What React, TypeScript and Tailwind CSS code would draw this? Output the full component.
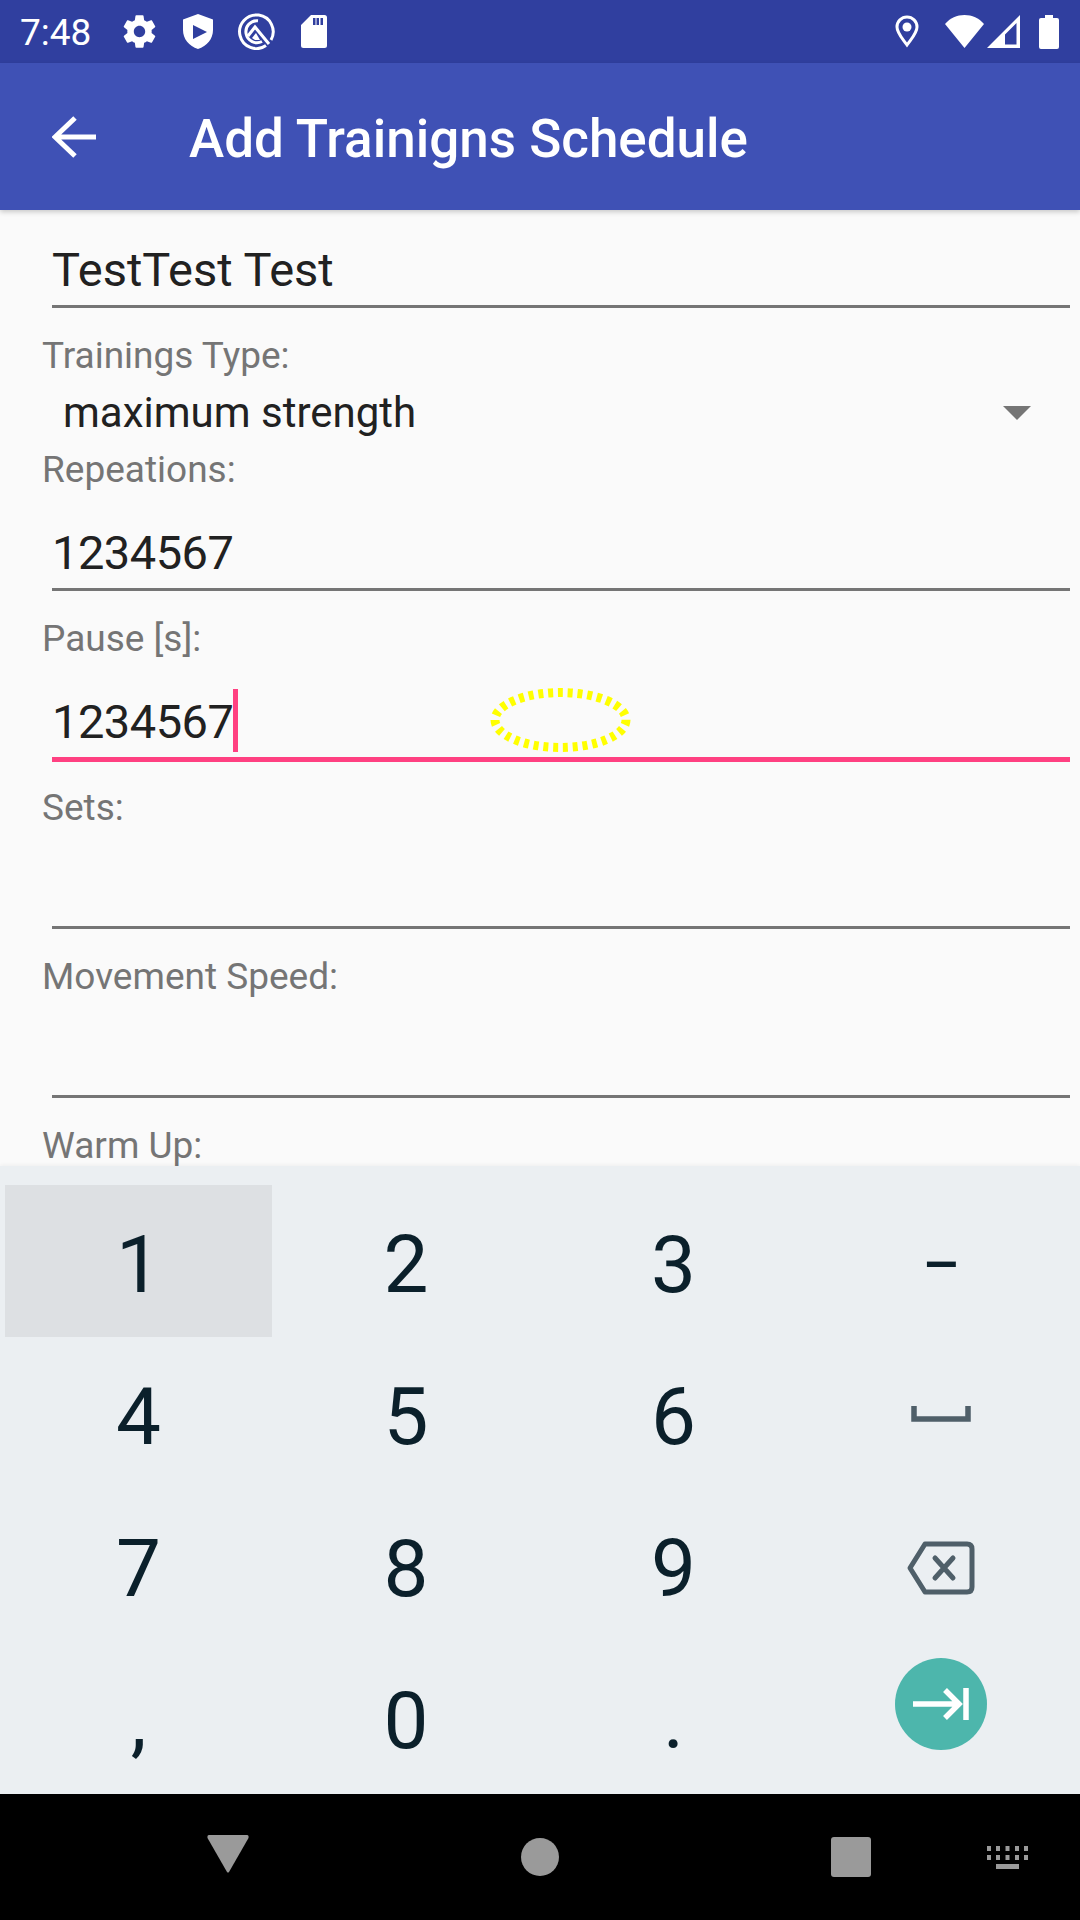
import React from "react";

const Gear = () => (
  <svg width="39" height="39" viewBox="0 0 24 24" fill="#fff"><path d="M19.43 12.98c.04-.32.07-.64.07-.98s-.03-.66-.07-.98l2.11-1.65c.19-.15.24-.42.12-.64l-2-3.46c-.12-.22-.39-.3-.61-.22l-2.49 1c-.52-.4-1.08-.73-1.69-.98l-.38-2.65C14.46 2.18 14.25 2 14 2h-4c-.25 0-.46.18-.49.42l-.38 2.65c-.61.25-1.17.59-1.69.98l-2.49-1c-.23-.09-.49 0-.61.22l-2 3.46c-.13.22-.07.49.12.64l2.11 1.65c-.04.32-.07.65-.07.98s.03.66.07.98l-2.11 1.65c-.19.15-.24.42-.12.64l2 3.46c.12.22.39.3.61.22l2.49-1c.52.4 1.08.73 1.69.98l.38 2.65c.03.24.24.42.49.42h4c.25 0 .46-.18.49-.42l.38-2.65c.61-.25 1.17-.59 1.69-.98l2.49 1c.23.09.49 0 .61-.22l2-3.46c.12-.22.07-.49-.12-.64l-2.11-1.65zM12 15.5c-1.93 0-3.5-1.57-3.5-3.5s1.57-3.5 3.5-3.5 3.5 1.57 3.5 3.5-1.57 3.500-3.500 3.500z" /></svg>
);
const Shield = () => (
  <svg width="30" height="35" viewBox="0 0 30 35"><path fill="#fff" fillRule="evenodd" d="M15 0 L30 5.500 V16 C30 25 24 32 15 35 C6 32 0 25 0 16 V5.500 Z M10 11 V25 L24 18 Z" /></svg>
);
const QIcon = () => (
  <svg width="37" height="37" viewBox="0 0 37 37" fill="none" stroke="#fff">
    <path strokeWidth="3" d="M28 32.500 A16.800 16.800 0 1 1 33 27" />
    <path strokeWidth="3" d="M24 28.500 A11 11 0 1 1 20 7.800" />
    <path strokeWidth="3" d="M10 23 L17 14 L31 31" />
    <path fill="#fff" stroke="none" d="M14 25 L18 20 L22 27 H17 Z" />
  </svg>
);
const Sd = () => (
  <svg width="26" height="33" viewBox="0 0 26 33"><path fill="#fff" fillRule="evenodd" d="M10 0 H23.500 Q26 0 26 2.500 V30.500 Q26 33 23.500 33 H2.500 Q0 33 0 30.500 V10 Z M12 3 V10 H14.500 V3 Z M15.500 3 V10 H18 V3 Z M19.500 3 V10 H22 V3 Z" /></svg>
);
const Pin = () => (
  <svg width="24" height="33" viewBox="0 0 24 33" fill="none"><path stroke="#fff" strokeWidth="3" d="M12 30 C7 23 2 18 2 12 A10 10 0 0 1 22 12 C22 18 17 23 12 30 Z" /><circle cx="12" cy="12" r="4.500" fill="#fff" /></svg>
);
const Wifi = () => (
  <svg width="39" height="33" viewBox="0 0 39 33"><path fill="#fff" d="M19.500 33 L0 9 C5 3 12 0 19.500 0 S34 3 39 9 Z" /></svg>
);
const Signal = () => (
  <svg width="33" height="33" viewBox="0 0 33 33"><path fill="#fff" fillRule="evenodd" d="M0 33 L33 0 V33 Z M18 29.500 H29.500 V8 L18 19.500 Z" /></svg>
);
const Battery = () => (
  <svg width="20" height="34" viewBox="0 0 20 34"><path fill="#fff" d="M6 0 H14 V3 H18 Q20 3 20 5 V32 Q20 34 18 34 H2 Q0 34 0 32 V5 Q0 3 2 3 H6 Z" /></svg>
);

const Label = ({ children }: { children: React.ReactNode }) => (
  <div className="h-[49px] pl-[42px] text-[37px] leading-[49px] text-[#757575]">{children}</div>
);

const Line = ({ active }: { active?: boolean }) => (
  <div className={active ? "ml-[52px] mr-[10px] h-[5px] bg-[#ff4081]" : "ml-[52px] mr-[10px] h-[3px] bg-[#757575]"} />
);

const Key = ({ children, pressed }: { children: React.ReactNode; pressed?: boolean }) => (
  <div className={`flex h-[152px] w-[267px] items-center justify-center text-[80px] leading-none text-[#0b202b] ${pressed ? "bg-[#dde0e3]" : ""}`}>
    {children}
  </div>
);

const Glyph = ({ children }: { children: React.ReactNode }) => <span className="pt-[7px]">{children}</span>;

export default function App() {
  return (
    <div className="flex h-[1920px] w-[1080px] flex-col overflow-hidden bg-[#fafafa] font-['Roboto',sans-serif]">
      <div className="flex h-[63px] shrink-0 items-center bg-[#303f9f] text-white">
        <span className="ml-[20px] w-[84px] pt-[2px] text-[37px] leading-none">7:48</span>
        <div className="ml-[16px] flex items-center">
          <Gear />
          <div className="ml-[24px]"><Shield /></div>
          <div className="ml-[25px]"><QIcon /></div>
          <div className="ml-[26px]"><Sd /></div>
        </div>
        <div className="ml-auto mr-[21px] flex items-center">
          <Pin />
          <div className="ml-[26px]"><Wifi /></div>
          <div className="ml-[3px]"><Signal /></div>
          <div className="ml-[19px]"><Battery /></div>
        </div>
      </div>

      <div className="z-10 flex h-[147px] shrink-0 items-center bg-[#3f51b5] shadow-[0_2px_5px_rgba(0,0,0,0.2)]">
        <svg className="ml-[52px]" width="44" height="44" viewBox="0 0 44 44" fill="none" stroke="#fff" strokeWidth="5"><path d="M44 22 H3 M23 3 L3 22 L23 41" /></svg>
        <span className="ml-[93px] pt-[5px] text-[53px] font-medium leading-none text-white">Add Trainigns Schedule</span>
      </div>

      <div className="min-h-0 flex-1 overflow-hidden">
        <div className="flex h-[95px] items-center pl-[52px] pt-[24px] text-[47px] leading-none text-[#212121]">TestTest Test</div>
        <Line />
        <div className="mt-[23px]"><Label>Trainings Type:</Label></div>
        <div className="flex h-[65px] items-center pl-[63px] pr-[49px] text-[42px] leading-none text-[#212121]">
          <span>maximum strength</span>
          <div className="ml-auto h-0 w-0 border-x-[14px] border-t-[14px] border-x-transparent border-t-[#757575]" />
        </div>
        <Label>Repeations:</Label>
        <div className="flex h-[94px] items-center pl-[52px] pt-[22px] text-[47px] leading-none tracking-[-0.5px] text-[#212121]">1234567</div>
        <Line />
        <div className="mt-[23px]"><Label>Pause [s]:</Label></div>
        <div className="relative flex h-[94px] items-center pl-[52px] pt-[22px] text-[47px] leading-none tracking-[-0.5px] text-[#212121]">
          <span>1234567</span>
          <div className="h-[63px] w-[5px] -translate-y-[1px] bg-[#ff4081]" />
          <svg className="absolute left-[490px] top-[24px]" width="141" height="66" viewBox="0 0 141 66" fill="none">
            <ellipse cx="70.500" cy="33" rx="65.500" ry="27.500" stroke="#ffff00" strokeWidth="9" strokeDasharray="5 4.800" />
          </svg>
        </div>
        <Line active />
        <div className="mt-[21px]"><Label>Sets:</Label></div>
        <div className="h-[94px]" />
        <Line />
        <div className="mt-[23px]"><Label>Movement Speed:</Label></div>
        <div className="h-[94px]" />
        <Line />
        <div className="mt-[23px]"><Label>Warm Up:</Label></div>
      </div>

      <div className="z-10 flex h-[628px] shrink-0 flex-col bg-[#ebeff2] px-[5px] pt-[19px] shadow-[0_-1px_4px_rgba(0,0,0,0.05)]">
        <div className="grid grid-cols-4">
          <Key pressed><Glyph>1</Glyph></Key><Key><Glyph>2</Glyph></Key><Key><Glyph>3</Glyph></Key>
          <Key><span className="pt-[7px] text-[58px] font-medium">–</span></Key>
          <Key><Glyph>4</Glyph></Key><Key><Glyph>5</Glyph></Key><Key><Glyph>6</Glyph></Key>
          <Key>
            <svg className="translate-y-[1px]" width="60" height="16" viewBox="0 0 60 16" fill="none" stroke="#4f5f69" strokeWidth="5.500"><path d="M3 0 V13 H57 V0" /></svg>
          </Key>
          <Key><Glyph>7</Glyph></Key><Key><Glyph>8</Glyph></Key><Key><Glyph>9</Glyph></Key>
          <Key>
            <svg className="translate-y-[3px]" width="68" height="54" viewBox="0 0 68 54" fill="none" stroke="#4f5f69" strokeWidth="5" strokeLinejoin="round" strokeLinecap="round"><path d="M18 3 H60 Q65 3 65 8 V46 Q65 51 60 51 H18 L3 27 Z" /><path d="M28 17 L46 37 M46 17 L28 37" /></svg>
          </Key>
          <Key><Glyph>,</Glyph></Key>
          <Key><Glyph>0</Glyph></Key>
          <Key><Glyph>.</Glyph></Key>
          <Key>
            <div className="flex h-[92px] w-[92px] -translate-y-[13px] items-center justify-center rounded-full bg-[#4db6ac]">
              <svg width="56" height="34" viewBox="0 0 56 34" fill="none" stroke="#fff" strokeWidth="5.500"><path d="M0 17 H46 M32 3 L46 17 L32 31" /><path d="M53 1 V33" /></svg>
            </div>
          </Key>
        </div>
      </div>

      <div className="relative flex h-[126px] shrink-0 bg-black">
        <svg className="absolute left-[207px] top-[41px]" width="42" height="38" viewBox="0 0 42 38"><path fill="#9a9a9a" d="M2 0 H40 Q42 0 41.500 3 L22 37 Q21 38 20 37 L.5 3 Q0 0 2 0 Z" /></svg>
        <div className="absolute left-[521px] top-[44px] h-[38px] w-[38px] rounded-full bg-[#9a9a9a]" />
        <div className="absolute left-[831px] top-[43px] h-[40px] w-[40px] rounded-[3px] bg-[#9a9a9a]" />
        <svg className="absolute left-[987px] top-[52px]" width="41" height="23" viewBox="0 0 41 23" fill="#9a9a9a">
          <path d="M0 0h4v5H0zM9 0h4v5H9zM18.500 0h4v5h-4zM28 0h4v5h-4zM37 0h4v5h-4zM0 9h4v5H0zM9 9h4v5H9zM18.500 9h4v5h-4zM28 9h4v5h-4zM37 9h4v5h-4zM9 18h23v5H9z" />
        </svg>
      </div>
    </div>
  );
}
